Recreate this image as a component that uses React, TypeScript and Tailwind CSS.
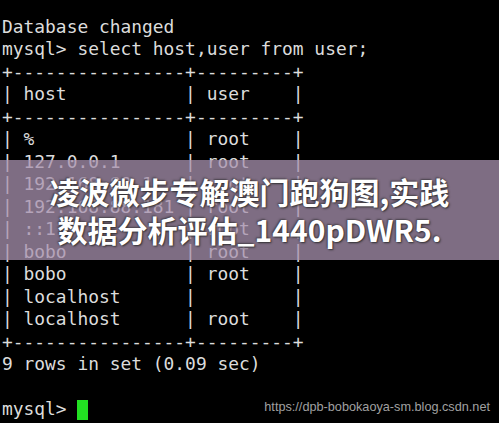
import React from "react";

const lines: string[] = [
  "Database changed",
  "mysql> select host,user from user;",
  "+----------------+---------+",
  "| host           | user    |",
  "+----------------+---------+",
  "| %              | root    |",
  "| 127.0.0.1      | root    |",
  "| 192.168.88.1   | root    |",
  "| 192.168.88.181 | root    |",
  "| ::1            | root    |",
  "| bobo           | root    |",
  "| bobo           | root    |",
  "| localhost      |         |",
  "| localhost      | root    |",
  "+----------------+---------+",
  "9 rows in set (0.09 sec)",
  "",
];

export default function App() {
  return (
    <div className="relative w-[499px] h-[423px] overflow-hidden bg-black">
      <div
        className="pt-[15.5px] pl-[2px] text-[17.9px] leading-[22.5px] text-[#dcdcdc] whitespace-pre"
        style={{ fontFamily: '"DejaVu Sans Mono", monospace' }}
      >
        {lines.map((l, i) => (
          <div key={i} className="h-[22.5px]">
            {l}
          </div>
        ))}
        <div className="h-[22.5px] flex items-center">
          <span>mysql&gt; </span>
          <span className="inline-block w-[11px] h-[20px] bg-[#22e022] mt-[2px]" />
        </div>
      </div>

      <div className="absolute left-0 right-0 top-[160px] h-[100px] bg-[rgba(168,146,175,0.75)] flex flex-col items-center justify-center">
        <div
          className="text-white font-bold text-[30px] leading-[38px] text-center [text-shadow:1px_1px_2px_rgba(40,40,40,0.9),-1px_-1px_2px_rgba(40,40,40,0.6)]"
          style={{ fontFamily: '"Noto Sans CJK SC", "Noto Sans", sans-serif' }}
        >
          <div>凌波微步专解澳门跑狗图,实践</div>
          <div>数据分析评估_1440pDWR5.</div>
        </div>
      </div>

      <div
        className="absolute right-[9px] top-[400px] text-[12.7px] leading-[15px] text-[#a0a0a0] [text-shadow:0_0_2px_rgba(0,0,0,0.9)]"
        style={{ fontFamily: '"Liberation Sans", Arial, sans-serif' }}
      >
        https://dpb-bobokaoya-sm.blog.csdn.net
      </div>
    </div>
  );
}
